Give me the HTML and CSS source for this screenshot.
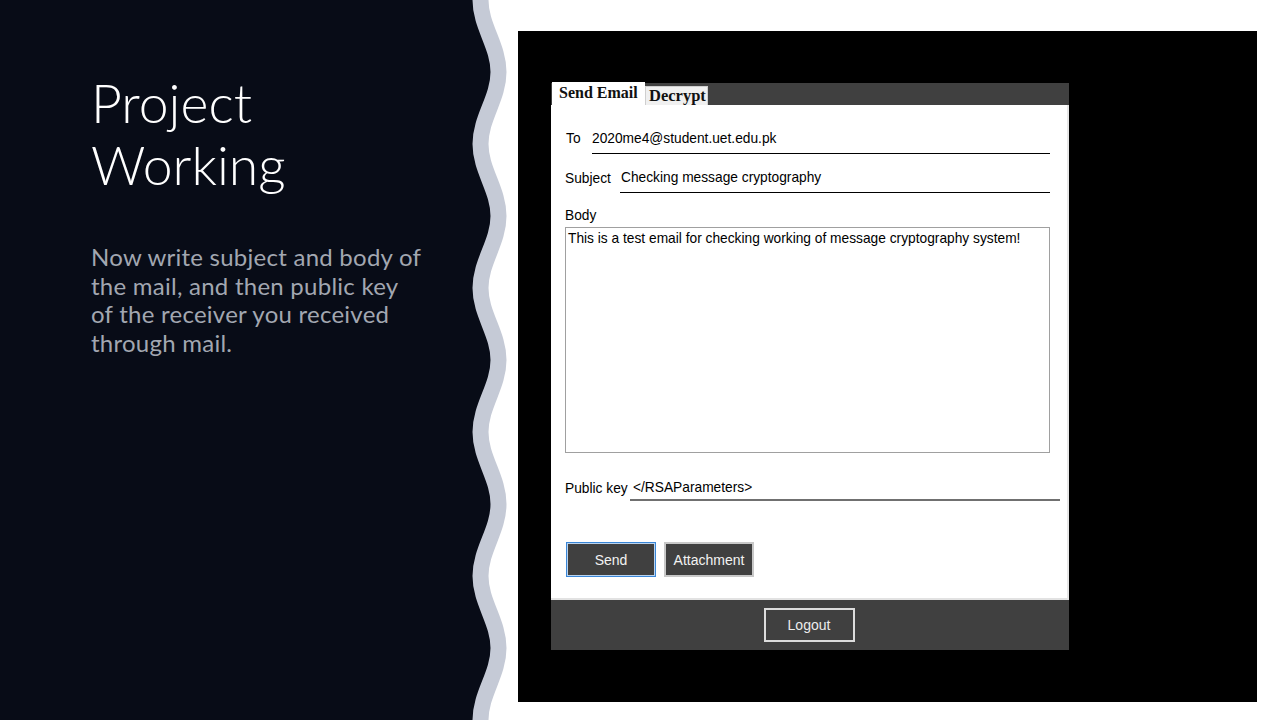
FILE: index.html
```html
<!DOCTYPE html>
<html>
<head>
<meta charset="utf-8">
<title>Project Working</title>
<link rel="stylesheet" href="styles.css">
</head>
<body>
<div class="slide">
  <section class="left">
    <svg class="wave" width="520" height="720" viewBox="0 0 520 720" aria-hidden="true">
      <path class="wave-fill" d="M480.5 0 C480.5 26.2 498.5 45.8 498.5 72 S480.5 117.8 480.5 144 S498.5 189.8 498.5 216 S480.5 261.8 480.5 288 S498.5 333.8 498.5 360 S480.5 405.8 480.5 432 S498.5 477.8 498.5 504 S480.5 549.8 480.5 576 S498.5 621.8 498.5 648 S480.5 693.8 480.5 720 L0 720 L0 0 Z"/>
      <path class="wave-line" d="M480.5 -10 L480.5 0 C480.5 26.2 498.5 45.8 498.5 72 S480.5 117.8 480.5 144 S498.5 189.8 498.5 216 S480.5 261.8 480.5 288 S498.5 333.8 498.5 360 S480.5 405.8 480.5 432 S498.5 477.8 498.5 504 S480.5 549.8 480.5 576 S498.5 621.8 498.5 648 S480.5 693.8 480.5 720 L480.5 730"/>
    </svg>
    <h1 class="title">Project<br>Working</h1>
    <p class="desc">Now write subject and body of<br>the mail, and then public key<br>of the receiver you received<br>through mail.</p>
  </section>
  <section class="right">
    <div class="screen">
      <div class="window">
        <div class="tabs">
          <span class="tab tab-active">Send Email</span>
          <span class="tab tab-idle">Decrypt</span>
        </div>
        <div class="page">
          <div class="field field-to">
            <span class="field-label label-to">To</span>
            <span class="field-value">2020me4@student.uet.edu.pk</span>
          </div>
          <div class="field field-subject">
            <span class="field-label label-subject">Subject</span>
            <span class="field-value value-subject">Checking message cryptography</span>
          </div>
          <div class="body-label">Body</div>
          <div class="body-box">This is a test email for checking working of message cryptography system!</div>
          <div class="field field-key">
            <span class="field-label label-key">Public key</span>
            <span class="field-value value-key">&lt;/RSAParameters&gt;</span>
          </div>
          <div class="actions">
            <span class="btn btn-send">Send</span>
            <span class="btn btn-attach">Attachment</span>
          </div>
        </div>
        <div class="footer">
          <span class="btn btn-logout">Logout</span>
        </div>
      </div>
    </div>
  </section>
</div>
</body>
</html>
```
FILE: styles.css
```css
* { box-sizing: border-box; }
html, body { margin: 0; padding: 0; }
body { background: #ffffff; width: 1280px; height: 720px; overflow: hidden; }

.slide {
  width: 1280px;
  height: 720px;
  display: grid;
  grid-template-columns: 518px 1fr;
  background: #ffffff;
}

.left {
  position: relative;
  padding: 71px 0 0 91px;
}
.wave {
  position: absolute;
  left: 0;
  top: 0;
  z-index: 0;
  display: block;
}
.wave-fill { fill: #080c17; }
.wave-line { fill: none; stroke: #c5cad6; stroke-width: 16; }

.title {
  position: relative;
  z-index: 1;
  margin: 0;
  font-family: Lato, "Open Sans", sans-serif;
  font-weight: 300;
  font-size: 53.5px;
  line-height: 62px;
  color: #ffffff;
}
.desc {
  position: relative;
  z-index: 1;
  margin: 48px 0 0 0;
  font-family: Lato, "Open Sans", sans-serif;
  font-weight: 400;
  font-size: 24px;
  letter-spacing: 0.25px;
  line-height: 28.5px;
  color: #a2a7b1;
}

.right {
  padding: 31px 23px 18px 0;
}
.screen {
  background: #000000;
  height: 671px;
  padding: 52px 0 0 33px;
}
.window {
  width: 518px;
  height: 567px;
  display: flex;
  flex-direction: column;
}

.tabs {
  height: 22px;
  background: #404040;
  display: flex;
  align-items: flex-end;
  padding-left: 1px;
  font-family: "Liberation Serif", "Times New Roman", serif;
  font-weight: bold;
  font-size: 16px;
  color: #111111;
}
.tab { display: block; white-space: nowrap; }
.tab-active {
  width: 93px;
  height: 23px;
  margin-top: -1px;
  line-height: 22px;
  padding-left: 7px;
  background: #ffffff;
}
.tab-idle {
  width: 63px;
  height: 19px;
  line-height: 18px;
  padding-left: 3px;
  background: #f0f0f0;
  border: 1px solid #cfcfcf;
  border-bottom: none;
  font-size: 16.5px;
}

.page {
  height: 495px;
  background: #ffffff;
  border-right: 2px solid #e6e6e6;
  border-bottom: 2px solid #e2e2e2;
  padding: 26px 17px 0 14px;
  font-family: "Liberation Sans", Arial, sans-serif;
  font-size: 13.75px;
  color: #000000;
}

.field {
  display: flex;
  align-items: flex-end;
}
.field-label {
  line-height: 16px;
  white-space: nowrap;
}
.field-value {
  flex: 1;
  height: 23px;
  line-height: 16px;
  white-space: nowrap;
  border-bottom: 1px solid #000000;
  padding-bottom: 6px;
}

.label-to { width: 26px; margin-left: 1px; margin-bottom: 7px; }
.field-subject { margin-top: 16px; }
.label-subject { width: 55px; margin-bottom: 6px; }
.value-subject { padding-left: 1px; }

.body-label {
  margin-top: 15px;
  line-height: 16px;
}
.body-box {
  margin-top: 3px;
  width: 485px;
  height: 226px;
  border: 1px solid #a0a0a0;
  padding: 3px 2px;
  line-height: 16px;
}

.field-key { margin-top: 27px; margin-right: -10px; }
.label-key { width: 65px; margin-bottom: 4px; }
.value-key {
  height: 21px;
  padding-left: 3px;
  padding-bottom: 3px;
  border-bottom: 2px solid #707070;
}

.actions {
  margin-top: 41px;
  display: flex;
  gap: 8px;
  padding-left: 1px;
}
.btn {
  display: flex;
  align-items: center;
  justify-content: center;
  background: #404040;
  color: #f2f2f2;
  font-family: "Liberation Sans", Arial, sans-serif;
  font-size: 14px;
  white-space: nowrap;
}
.btn-send {
  width: 90px;
  height: 35px;
  border: 1px solid #3a86d6;
  box-shadow: inset 0 0 0 1px #b9d3ef;
}
.btn-attach {
  width: 90px;
  height: 35px;
  border: 2px solid #c8c8c8;
}

.footer {
  flex: 1;
  background: #404040;
  display: flex;
  align-items: center;
  justify-content: center;
}
.btn-logout {
  width: 91px;
  height: 34px;
  margin-left: -2px;
  border: 2px solid #dcdcdc;
  color: #ececec;
}
```
